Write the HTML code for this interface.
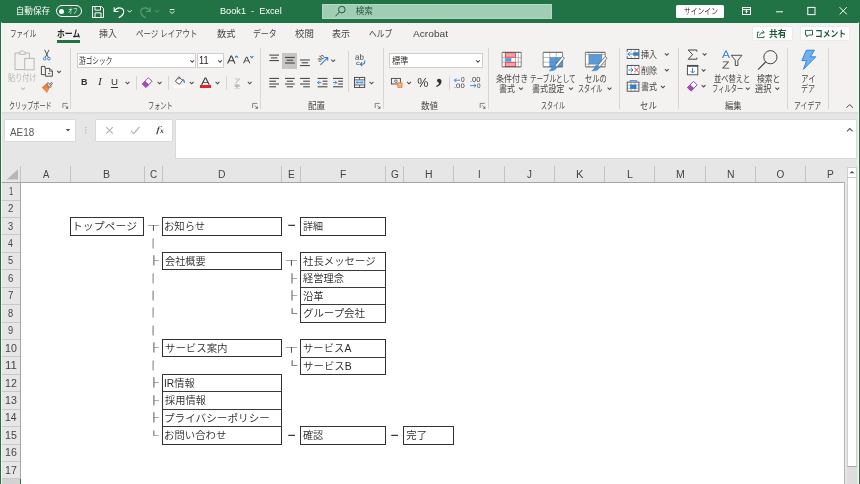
<!DOCTYPE html>
<html lang="ja">
<head>
<meta charset="utf-8">
<title>Book1 - Excel</title>
<style>
html,body{margin:0;padding:0}
body{width:860px;height:484px;overflow:hidden;position:relative;background:#e6e6e6;font-family:"Liberation Sans","Noto Sans CJK JP",sans-serif}
.a{position:absolute}
.t{position:absolute;white-space:pre;transform-origin:0 50%}
svg{position:absolute;overflow:visible}
.vs{position:absolute;width:1px;background:#d2d0ce}
.chev{position:absolute}
</style>
</head>
<body>
<!-- ===== title bar ===== -->
<div class="a" style="left:0;top:0;width:860px;height:22.5px;background:#217346"></div>
<!-- ribbon background -->
<div class="a" style="left:0;top:22.5px;width:860px;height:89.3px;background:#f3f2f1"></div>
<div class="a" style="left:0;top:111.8px;width:860px;height:3.6px;background:linear-gradient(#d9d9d9,#e6e6e6)"></div>
<!-- autosave toggle -->
<div class="a" style="left:55.5px;top:5px;width:26.5px;height:12.2px;border:1px solid #fff;border-radius:7px;box-sizing:border-box"></div>
<div class="a" style="left:58.6px;top:8.6px;width:5px;height:5px;border-radius:50%;background:#fff"></div>
<svg style="left:0;top:0" width="860" height="23" viewBox="0 0 860 23" fill="none" stroke="#fff" stroke-width="1">
<!-- save icon -->
<path d="M92.5 6.5h9l2 2v9h-11z"/>
<path d="M95 6.5v3.6h5.5V6.5"/>
<path d="M95 17.5v-4.6h6v4.6"/>
<!-- undo -->
<path d="M114.2 7.2v4.3h4.3" stroke-width="1.1"/>
<path d="M114.4 11.3c1.4-2.6 4-3.8 6.3-3.2c2.2 0.6 3.4 2.7 2.8 4.9c-0.5 1.9-2.3 3.6-4.8 4.7" stroke-width="1.1"/>
<path d="M127.6 10.2l2 2l2-2" stroke-width="1"/>
<!-- redo (disabled) -->
<g stroke="#5f9c7c">
<path d="M150.2 7.2v4.3h-4.3" stroke-width="1.1"/>
<path d="M150 11.3c-1.4-2.6-4-3.8-6.3-3.2c-2.2 0.6-3.4 2.7-2.8 4.9c0.5 1.9 2.3 3.6 4.8 4.7" stroke-width="1.1"/>
<path d="M155 10.2l2 2l2-2" stroke-width="1"/>
</g>
<!-- customize QAT -->
<path d="M169.8 9.6h4.6" stroke-width="1"/>
<path d="M169.8 11.3l2.3 2.3l2.3-2.3" stroke-width="1"/>
</svg>
<!-- search box -->
<div class="a" style="left:322px;top:3.8px;width:230px;height:15px;background:#a0ceb4;border:1px solid #b4d8c4;box-sizing:border-box"></div>
<svg style="left:0;top:0" width="860" height="23" viewBox="0 0 860 23" fill="none" stroke="#1d5a3a" stroke-width="1">
<circle cx="341.8" cy="9.6" r="3.3"/>
<path d="M339.4 12.1l-4 4.2"/>
</svg>
<!-- sign in -->
<div class="a" style="left:676.3px;top:4.5px;width:47.5px;height:13px;background:#fff;border-radius:1.5px"></div>
<svg style="left:0;top:0" width="860" height="23" viewBox="0 0 860 23" fill="none" stroke="#fff" stroke-width="1">
<!-- ribbon display options -->
<rect x="742.5" y="7.5" width="8" height="7"/>
<path d="M742.5 9.5h8"/>
<path d="M746.5 13.3v-2.8M745 11.8l1.5-1.5l1.5 1.5" stroke-width="0.9"/>
<!-- minimize -->
<path d="M776 11.8h7"/>
<!-- maximize -->
<rect x="807.8" y="7.4" width="7.2" height="7.2"/>
<!-- close -->
<path d="M839.6 7.2l7.2 7.2M846.8 7.2l-7.2 7.2"/>
</svg>

<!-- home underline -->
<div class="a" style="left:56.6px;top:40.4px;width:23.4px;height:2.2px;background:#217346"></div>
<!-- share / comment buttons -->
<div class="a" style="left:752.4px;top:26.1px;width:40.8px;height:15.4px;background:#fff;border:1px solid #edebe9;box-sizing:border-box;border-radius:2px"></div>
<div class="a" style="left:799.6px;top:26.1px;width:50.8px;height:15.4px;background:#fff;border:1px solid #edebe9;box-sizing:border-box;border-radius:2px"></div>
<svg style="left:0;top:0" width="860" height="46" viewBox="0 0 860 46" fill="none" stroke="#1e5a3a" stroke-width="0.9">
<!-- share icon -->
<path d="M759.2 32.2h-1.8v5.4h6.6v-1.6"/>
<path d="M759.6 35.6c0.4-2 1.8-3.3 4.2-3.4"/>
<path d="M762.4 30.4l1.8 1.8l-1.8 1.8"/>
<!-- comment icon -->
<path d="M805.5 30.4h7v4.6h-4l-1.7 1.8v-1.8h-1.3z"/>
</svg>

<div class="vs" style="left:70.3px;top:47.5px;height:61.5px;background:#d8d6d4"></div>
<div class="vs" style="left:260.1px;top:47.5px;height:61.5px;background:#d8d6d4"></div>
<div class="vs" style="left:382.5px;top:47.5px;height:61.5px;background:#d8d6d4"></div>
<div class="vs" style="left:488.3px;top:47.5px;height:61.5px;background:#d8d6d4"></div>
<div class="vs" style="left:618.7px;top:47.5px;height:61.5px;background:#d8d6d4"></div>
<div class="vs" style="left:678.0px;top:47.5px;height:61.5px;background:#d8d6d4"></div>
<div class="vs" style="left:787.1px;top:47.5px;height:61.5px;background:#d8d6d4"></div>
<div class="vs" style="left:828.1px;top:47.5px;height:61.5px;background:#d8d6d4"></div>
<div class="vs" style="left:135.9px;top:76px;height:13.6px;background:#d8d6d4"></div>
<div class="vs" style="left:167.9px;top:76px;height:13.6px;background:#d8d6d4"></div>
<div class="vs" style="left:226.2px;top:76px;height:13.6px;background:#d8d6d4"></div>
<div class="vs" style="left:449.0px;top:76px;height:13.6px;background:#d8d6d4"></div>
<div class="vs" style="left:348px;top:51.3px;height:40.5px;background:#d8d6d4"></div>
<div class="a" style="left:77px;top:53px;width:119.4px;height:15.4px;background:#fff;border:1px solid #d0cecc;box-sizing:border-box"></div>
<div class="a" style="left:197.1px;top:53px;width:27.2px;height:15.4px;background:#fff;border:1px solid #d0cecc;box-sizing:border-box"></div>
<div class="a" style="left:389px;top:53px;width:93.6px;height:15.4px;background:#fff;border:1px solid #d0cecc;box-sizing:border-box"></div>
<div class="a" style="left:282.2px;top:52.6px;width:14.8px;height:16px;background:#c8c6c4"></div>
<div class="a" style="left:174.2px;top:85.2px;width:10.6px;height:2.6px;background:#fff"></div>
<div class="a" style="left:199.8px;top:85.4px;width:11.1px;height:2.4px;background:#e8202a"></div>
<div class="a" style="left:111.4px;top:86.8px;width:6.8px;height:0.9px;background:#333"></div>
<svg style="left:0;top:0" width="860" height="112" viewBox="0 0 860 112" fill="none" stroke-linecap="butt">
<path d="M57.10 70.75l1.90 1.90l1.90 -1.90" stroke="#4a4948" stroke-width="1.05" fill="none"/>
<path d="M190.30 60.25l1.90 1.90l1.90 -1.90" stroke="#4a4948" stroke-width="1.05" fill="none"/>
<path d="M218.20 60.25l1.90 1.90l1.90 -1.90" stroke="#4a4948" stroke-width="1.05" fill="none"/>
<path d="M125.60 81.85l1.90 1.90l1.90 -1.90" stroke="#4a4948" stroke-width="1.05" fill="none"/>
<path d="M157.70 81.85l1.90 1.90l1.90 -1.90" stroke="#4a4948" stroke-width="1.05" fill="none"/>
<path d="M189.80 81.85l1.90 1.90l1.90 -1.90" stroke="#4a4948" stroke-width="1.05" fill="none"/>
<path d="M215.60 81.85l1.90 1.90l1.90 -1.90" stroke="#4a4948" stroke-width="1.05" fill="none"/>
<path d="M247.80 81.85l1.90 1.90l1.90 -1.90" stroke="#4a4948" stroke-width="1.05" fill="none"/>
<path d="M331.30 59.65l1.90 1.90l1.90 -1.90" stroke="#4a4948" stroke-width="1.05" fill="none"/>
<path d="M369.60 81.85l1.90 1.90l1.90 -1.90" stroke="#4a4948" stroke-width="1.05" fill="none"/>
<path d="M476.10 60.25l1.90 1.90l1.90 -1.90" stroke="#4a4948" stroke-width="1.05" fill="none"/>
<path d="M407.10 81.85l1.90 1.90l1.90 -1.90" stroke="#4a4948" stroke-width="1.05" fill="none"/>
<path d="M519.10 87.65l1.90 1.90l1.90 -1.90" stroke="#4a4948" stroke-width="1.05" fill="none"/>
<path d="M569.10 87.65l1.90 1.90l1.90 -1.90" stroke="#4a4948" stroke-width="1.05" fill="none"/>
<path d="M607.60 87.65l1.90 1.90l1.90 -1.90" stroke="#4a4948" stroke-width="1.05" fill="none"/>
<path d="M664.90 53.45l1.90 1.90l1.90 -1.90" stroke="#4a4948" stroke-width="1.05" fill="none"/>
<path d="M664.90 69.05l1.90 1.90l1.90 -1.90" stroke="#4a4948" stroke-width="1.05" fill="none"/>
<path d="M661.00 85.95l1.90 1.90l1.90 -1.90" stroke="#4a4948" stroke-width="1.05" fill="none"/>
<path d="M702.70 53.25l1.90 1.90l1.90 -1.90" stroke="#4a4948" stroke-width="1.05" fill="none"/>
<path d="M701.70 69.25l1.90 1.90l1.90 -1.90" stroke="#4a4948" stroke-width="1.05" fill="none"/>
<path d="M701.70 85.05l1.90 1.90l1.90 -1.90" stroke="#4a4948" stroke-width="1.05" fill="none"/>
<path d="M745.90 87.65l1.90 1.90l1.90 -1.90" stroke="#4a4948" stroke-width="1.05" fill="none"/>
<path d="M775.40 87.65l1.90 1.90l1.90 -1.90" stroke="#4a4948" stroke-width="1.05" fill="none"/>
<path d="M21.10 87.65l1.90 1.90l1.90 -1.90" stroke="#bdbbb9" stroke-width="1.05" fill="none"/>
<path d="M846.4 107.8l3.3-3.3l3.3 3.3" stroke="#444" stroke-width="1"/>
<path d="M67.5 103.4h-4.6v4.6" stroke="#6a6866" stroke-width="0.8"/>
<path d="M64.9 105.4l2.8 2.8" stroke="#6a6866" stroke-width="0.8"/>
<path d="M68.1 106.0v2.8h-2.8z" fill="#6a6866" stroke="none"/>
<path d="M257.2 103.4h-4.6v4.6" stroke="#6a6866" stroke-width="0.8"/>
<path d="M254.6 105.4l2.8 2.8" stroke="#6a6866" stroke-width="0.8"/>
<path d="M257.8 106.0v2.8h-2.8z" fill="#6a6866" stroke="none"/>
<path d="M379.8 103.4h-4.6v4.6" stroke="#6a6866" stroke-width="0.8"/>
<path d="M377.2 105.4l2.8 2.8" stroke="#6a6866" stroke-width="0.8"/>
<path d="M380.4 106.0v2.8h-2.8z" fill="#6a6866" stroke="none"/>
<path d="M484.8 103.4h-4.6v4.6" stroke="#6a6866" stroke-width="0.8"/>
<path d="M482.2 105.4l2.8 2.8" stroke="#6a6866" stroke-width="0.8"/>
<path d="M485.4 106.0v2.8h-2.8z" fill="#6a6866" stroke="none"/>
<path d="M19.6 53h-4.6v16.6h9.4" stroke="#b9b7b5" stroke-width="1"/>
<path d="M25 53h4.4v5" stroke="#b9b7b5" stroke-width="1"/>
<path d="M19.4 54.4v-2.4h1.6c0-2 2.8-2 2.8 0h1.6v2.4z" stroke="#b9b7b5" stroke-width="0.9"/>
<rect x="24.7" y="58.4" width="9.4" height="11.4" stroke="#b9b7b5" stroke-width="1" fill="#f3f2f1"/>
<path d="M44.6 49.8l3.6 7.4M49 49.8l-3.6 7.4" stroke="#444" stroke-width="0.9"/>
<circle cx="44.7" cy="58.7" r="1.35" stroke="#2b7cd3" stroke-width="0.9"/>
<circle cx="48.9" cy="58.7" r="1.35" stroke="#2b7cd3" stroke-width="0.9"/>
<path d="M45 68.4v-2h-3.6v8.2h3.4" stroke="#444" stroke-width="0.95"/>
<path d="M45.4 68.4h4.4l2.6 2.6v5.2h-7z" stroke="#444" stroke-width="0.95"/>
<path d="M49.6 68.6v2.6h2.6" stroke="#444" stroke-width="0.8"/>
<path d="M48 73.6h2.4" stroke="#444" stroke-width="0.8"/>
<path d="M42.2 87.4l4.2-3.4l3 3.6l-2.6 5z" fill="#ed7d31" stroke="#e0701f" stroke-width="0.6"/>
<path d="M43.8 89.2l2.8 2.6M45.4 87.6l2.8 2.8" stroke="#fbd3b3" stroke-width="0.6"/>
<path d="M46.6 83.8l1.6-1.2l3.2 3.8l-1.6 1.2z" stroke="#444" stroke-width="0.8" fill="#f3f2f1"/>
<path d="M49.6 84.2l1.4-1.4c0.8-0.7 1.8 0.4 1.1 1.2l-1.3 1.4" stroke="#444" stroke-width="0.8"/>
<path d="M142.3 84l6-6.2l3.8 3.4l-6 6.2z" stroke="#a349b5" stroke-width="1" fill="#fff"/>
<path d="M142.3 84l2.7-2.8l3.8 3.4l-2.7 2.8z" fill="#a349b5" stroke="#a349b5" stroke-width="0.6"/>
<path d="M177.6 78.2l-2.2 3.2l4 3l3.2-4.2l-3.6-2.8" stroke="#444" stroke-width="0.9" fill="#fff"/>
<path d="M178.2 79.6v-2.2c0-0.9 1.5-0.9 1.5 0v1.2" stroke="#444" stroke-width="0.7"/>
<path d="M182.6 79.2c1.3 0.7 1.9 2 1.6 3.6" stroke="#2b7cd3" stroke-width="1.1"/>
<path d="M235 57.7l1.5-1.6l1.5 1.6" stroke="#2b7cd3" stroke-width="1.05"/>
<path d="M250.3 56.1l1.5 1.6l1.5-1.6" stroke="#2b7cd3" stroke-width="1.05"/>
<path d="M269.3 55.1H279" stroke="#3a3a3a" stroke-width="1.0"/>
<path d="M271 57.9H277.4" stroke="#3a3a3a" stroke-width="1.0"/>
<path d="M269.3 60.6H279" stroke="#3a3a3a" stroke-width="1.0"/>
<path d="M285 57.4H294.8" stroke="#3a3a3a" stroke-width="1.0"/>
<path d="M286.6 60.2H293.2" stroke="#3a3a3a" stroke-width="1.0"/>
<path d="M285 63H294.8" stroke="#3a3a3a" stroke-width="1.0"/>
<path d="M300 60H309.9" stroke="#3a3a3a" stroke-width="1.0"/>
<path d="M301.6 62.8H308.2" stroke="#3a3a3a" stroke-width="1.0"/>
<path d="M300 65.6H309.9" stroke="#3a3a3a" stroke-width="1.0"/>
<path d="M269.3 78.4H279" stroke="#3a3a3a" stroke-width="1.0"/>
<path d="M269.3 81.2H276" stroke="#3a3a3a" stroke-width="1.0"/>
<path d="M269.3 84H279" stroke="#3a3a3a" stroke-width="1.0"/>
<path d="M269.3 86.8H276" stroke="#3a3a3a" stroke-width="1.0"/>
<path d="M285 78.4H294.8" stroke="#3a3a3a" stroke-width="1.0"/>
<path d="M286.8 81.2H293" stroke="#3a3a3a" stroke-width="1.0"/>
<path d="M285 84H294.8" stroke="#3a3a3a" stroke-width="1.0"/>
<path d="M286.8 86.8H293" stroke="#3a3a3a" stroke-width="1.0"/>
<path d="M300 78.4H309.9" stroke="#3a3a3a" stroke-width="1.0"/>
<path d="M303.2 81.2H309.9" stroke="#3a3a3a" stroke-width="1.0"/>
<path d="M300 84H309.9" stroke="#3a3a3a" stroke-width="1.0"/>
<path d="M303.2 86.8H309.9" stroke="#3a3a3a" stroke-width="1.0"/>
<path d="M317.6 78.4H327.5" stroke="#3a3a3a" stroke-width="1.0"/>
<path d="M317.6 86.8H327.5" stroke="#3a3a3a" stroke-width="1.0"/>
<path d="M322.6 81.2H327.5" stroke="#3a3a3a" stroke-width="1.0"/>
<path d="M322.6 84H327.5" stroke="#3a3a3a" stroke-width="1.0"/>
<path d="M321.4 82.6h-3.8M319.4 80.8l-1.8 1.8l1.8 1.8" stroke="#2b7cd3" stroke-width="0.9"/>
<path d="M333 78.4H343" stroke="#3a3a3a" stroke-width="1.0"/>
<path d="M333 86.8H343" stroke="#3a3a3a" stroke-width="1.0"/>
<path d="M338.2 81.2H343" stroke="#3a3a3a" stroke-width="1.0"/>
<path d="M338.2 84H343" stroke="#3a3a3a" stroke-width="1.0"/>
<path d="M333 82.6h3.8M335 80.8l1.8 1.8l-1.8 1.8" stroke="#2b7cd3" stroke-width="0.9"/>
<path d="M320.4 64.9l7.2-7.3M324.4 57.4h3.3v3.3" stroke="#2b7cd3" stroke-width="1.05"/>
<path d="M364.6 60.4c0.6 2.2-0.4 3.8-2.4 3.9h-1.8M362.2 62.4l-1.9 1.9l1.9 1.9" stroke="#2b7cd3" stroke-width="1.05"/>
<rect x="354.5" y="77.4" width="10.2" height="10" stroke="#444" stroke-width="0.95" fill="#fff"/>
<rect x="355" y="80" width="9.2" height="4.8" fill="#cfe3f7" stroke="none"/>
<path d="M354.5 79.8h10.2M354.5 85h10.2M359.6 77.4v2.4M359.6 85v2.4" stroke="#444" stroke-width="0.8"/>
<path d="M356.4 82.4h6.4M357.6 81.2l-1.3 1.2l1.3 1.2M361.6 81.2l1.3 1.2l-1.3 1.2" stroke="#2b7cd3" stroke-width="0.8"/>
<rect x="391.4" y="78.4" width="9" height="5.6" stroke="#444" stroke-width="0.9"/>
<circle cx="395.9" cy="81.2" r="1.3" stroke="#444" stroke-width="0.7"/>
<rect x="397.4" y="82.4" width="5" height="5.4" fill="#ed7d31" stroke="none"/>
<path d="M398.2 84.2h3.4M398.2 86h3.4" stroke="#fff" stroke-width="0.7"/>
<path d="M454.4 80.2h5.6M456.2 78.4l-1.8 1.8l1.8 1.8" stroke="#2b7cd3" stroke-width="0.9"/>
<path d="M470.2 85.6h5.8M474.2 83.8l1.8 1.8l-1.8 1.8" stroke="#2b7cd3" stroke-width="0.9"/>
<rect x="502.1" y="52.3" width="19.100000000000023" height="14.600000000000009" fill="#fff" stroke="none"/>
<path d="M505.2 52.3V66.9M515.5 52.3V66.9M518.3 52.3V66.9M502.1 57.6H521.2M502.1 62.1H521.2" stroke="#8f8f8f" stroke-width="0.6"/>
<rect x="505.4" y="52.8" width="10" height="4.4" fill="#f8a0a8" stroke="#f03a45" stroke-width="0.8"/>
<rect x="505.2" y="58.1" width="6.2" height="3.6" fill="#5b9bd5" stroke="none"/>
<rect x="505.4" y="62.6" width="10.3" height="4" fill="#f8a0a8" stroke="#f03a45" stroke-width="0.8"/>
<path d="M502.1 52.3H521.2M502.1 66.9H521.2" stroke="#444" stroke-width="0.9"/>
<path d="M502.1 52.3V66.9M521.2 52.3V66.9" stroke="#6a6a6a" stroke-width="0.8"/>
<rect x="543.1" y="52.3" width="19.5" height="14.600000000000009" fill="#fff" stroke="none"/>
<rect x="549.8" y="57.5" width="12.8" height="9.4" fill="#5b9bd5"/>
<path d="M549.8 52.3V57.5M556.2 52.3V57.5M543.1 57.5H549.8M543.1 62.2H549.8" stroke="#8f8f8f" stroke-width="0.6"/>
<path d="M549.8 57.5V66.9M556.2 57.5V66.9M549.8 57.5H562.6M549.8 62.2H562.6" stroke="#3f7fc0" stroke-width="0.6"/>
<path d="M543.1 52.3H562.6M543.1 66.9H562.6" stroke="#444" stroke-width="0.9"/>
<path d="M543.1 52.3V66.9M562.6 52.3V66.9" stroke="#6a6a6a" stroke-width="0.8"/>
<path d="M562.3 56.5l2 1.6l-7.5 9.2l-2-1.6z" fill="#fafafa" stroke="#555" stroke-width="0.7"/>
<path d="M557 67.2c-0.9 2.4-3.9 4-8 3.6c2-1 2.4-2.4 3-4c0.8-1.8 2.6-2.2 3.4-1.4z" fill="#4a90d9" stroke="#3f86d0" stroke-width="0.5"/>
<rect x="585.4" y="52.3" width="19.800000000000068" height="14.600000000000009" fill="#fff" stroke="none"/>
<path d="M588.8 52.3V66.9M601.8 52.3V66.9M585.4 54.4H605.2M585.4 64.2H605.2" stroke="#8f8f8f" stroke-width="0.6"/>
<rect x="589.2" y="54.7" width="12.2" height="9.2" fill="#5b9bd5" stroke="#3f7fc0" stroke-width="0.6"/>
<path d="M585.4 52.3H605.2M585.4 66.9H605.2" stroke="#444" stroke-width="0.9"/>
<path d="M585.4 52.3V66.9M605.2 52.3V66.9" stroke="#6a6a6a" stroke-width="0.8"/>
<path d="M605.0999999999999 56.5l2 1.6l-7.5 9.2l-2-1.6z" fill="#fafafa" stroke="#555" stroke-width="0.7"/>
<path d="M599.8 67.2c-0.9 2.4-3.9 4-8 3.6c2-1 2.4-2.4 3-4c0.8-1.8 2.6-2.2 3.4-1.4z" fill="#4a90d9" stroke="#3f86d0" stroke-width="0.5"/>
<rect x="627.2" y="49.4" width="11.7" height="9.1" fill="#fff" stroke="none"/>
<path d="M627.2 52.4h11.7M627.2 55.5h11.7M631.1 49.4v9.1M635.0 49.4v9.1" stroke="#777" stroke-width="0.6"/>
<rect x="627.2" y="49.4" width="11.7" height="9.1" fill="none" stroke="#444" stroke-width="0.9"/>
<rect x="626.6" y="51.8" width="6.6" height="4.4" fill="#fff" stroke="none"/>
<rect x="633.2" y="52.6" width="5.699999999999999" height="2.8" fill="#2b7cd3"/>
<path d="M633.4000000000001 54.0h-5.6M629.8000000000001 52.0l-2 2l2 2" stroke="#2b7cd3" stroke-width="1"/>
<rect x="627.2" y="65.4" width="11.7" height="9.1" fill="#fff" stroke="none"/>
<path d="M627.2 68.4h11.7M627.2 71.5h11.7M631.1 65.4v9.1M635.0 65.4v9.1" stroke="#777" stroke-width="0.6"/>
<rect x="627.2" y="65.4" width="11.7" height="9.1" fill="none" stroke="#444" stroke-width="0.9"/>
<rect x="627.7" y="67.60000000000001" width="11.299999999999999" height="4.8" fill="#fff" stroke="none"/>
<path d="M628.4000000000001 70.0h4.6M631.2 68.2l1.8 1.8l-1.8 1.8" stroke="#2b7cd3" stroke-width="1"/>
<path d="M634.6 68.0l3.8 3.9M638.4000000000001 68.0l-3.8 3.9" stroke="#e8303a" stroke-width="1"/>
<rect x="627.2" y="82.1" width="11.7" height="9.1" fill="#fff" stroke="none"/>
<path d="M627.2 85.1h11.7M627.2 88.19999999999999h11.7M631.1 82.1v9.1M635.0 82.1v9.1" stroke="#777" stroke-width="0.6"/>
<rect x="627.2" y="82.1" width="11.7" height="9.1" fill="none" stroke="#444" stroke-width="0.9"/>
<rect x="630.2" y="84.69999999999999" width="6.2" height="4.2" fill="#2b7cd3"/>
<path d="M630.0 81.69999999999999v-1h6.8v1" stroke="#2b7cd3" stroke-width="0.9"/>
<path d="M696.8 51.6v-1.6h-8.6l4.4 4.6l-4.4 4.6h8.6v-1.6" stroke="#444" stroke-width="1"/>
<rect x="687.4" y="65.4" width="10.4" height="9.4" stroke="#444" stroke-width="0.9" fill="#fff"/>
<path d="M687 66h11.2" stroke="#444" stroke-width="1.5"/>
<path d="M692.6 68v5M690.6 71l2 2l2-2" stroke="#2b7cd3" stroke-width="1"/>
<path d="M687.4 87.6l6-6.2l3.8 3.4l-6 6.2z" stroke="#a349b5" stroke-width="1" fill="#fff"/>
<path d="M687.4 87.6l2.7-2.8l3.8 3.4l-2.7 2.8z" fill="#a349b5" stroke="#a349b5" stroke-width="0.6"/>
<path d="M731.2 55.3h10.8l-4.1 4.9v5.3h-2.6v-5.3z" stroke="#444" stroke-width="0.95"/>
<circle cx="770.4" cy="57.2" r="6.6" stroke="#444" stroke-width="1"/>
<path d="M765.6 62l-7.6 7.6" stroke="#444" stroke-width="1.1"/>
<path d="M806.4 50.2h8l-4 6.6h5.4l-12.4 12.6l3.2-8.8h-4.8z" fill="#6fb1ee" stroke="#2b7cd3" stroke-width="0.9" stroke-linejoin="round"/>
<text x="0" y="0" transform="translate(319.6,62.6) rotate(-45)" font-family="Liberation Sans, sans-serif" font-size="7" fill="#444" stroke="none">ab</text>
</svg>
<!-- name box -->
<div class="a" style="left:4.5px;top:119.6px;width:70.6px;height:21.4px;background:#fff;box-shadow:0 0 0 0.6px #d2d2d2"></div>
<!-- fx box -->
<div class="a" style="left:96.4px;top:119.6px;width:75.8px;height:21.4px;background:#fff;box-shadow:0 0 0 0.6px #d2d2d2"></div>
<!-- formula input -->
<div class="a" style="left:175.5px;top:119.6px;width:680px;height:38.5px;background:#fff;box-shadow:0 0 0 0.6px #d2d2d2"></div>
<svg style="left:0;top:0" width="860" height="166" viewBox="0 0 860 166" fill="none">
<!-- name box dropdown -->
<path d="M65.7 129h4.7l-2.35 2.5z" fill="#555"/>
<!-- dots -->
<circle cx="85.8" cy="127.6" r="0.6" fill="#a0a0a0"/><circle cx="85.8" cy="130.2" r="0.6" fill="#a0a0a0"/><circle cx="85.8" cy="132.8" r="0.6" fill="#a0a0a0"/>
<!-- x and check -->
<path d="M106.2 127.2l6.6 6.4M112.8 127.2l-6.6 6.4" stroke="#b0b0b0" stroke-width="1.1"/>
<path d="M130.8 130.6l3 3l5.6-6.8" stroke="#b0b0b0" stroke-width="1.1"/>
<!-- expand formula bar -->
<path d="M847 131.4l2.8-2.8l2.8 2.8" stroke="#555" stroke-width="1.1"/>
</svg>

<div class="a" style="left:21px;top:182.5px;width:823.7px;height:302px;background:#fff"></div>
<div class="a" style="left:1.3px;top:181.7px;width:844px;height:1px;background:#a6a6a6"></div>
<div class="a" style="left:844.2px;top:182px;width:1.1px;height:302px;background:#b4b4b4"></div>
<div class="a" style="left:20.1px;top:182px;width:1px;height:302px;background:#a6a6a6"></div>
<div class="a" style="left:20.0px;top:166px;width:1px;height:16px;background:#c3c3c3"></div>
<div class="a" style="left:69.9px;top:166px;width:1px;height:16px;background:#c3c3c3"></div>
<div class="a" style="left:143.5px;top:166px;width:1px;height:16px;background:#c3c3c3"></div>
<div class="a" style="left:161.9px;top:166px;width:1px;height:16px;background:#c3c3c3"></div>
<div class="a" style="left:281.3px;top:166px;width:1px;height:16px;background:#c3c3c3"></div>
<div class="a" style="left:299.9px;top:166px;width:1px;height:16px;background:#c3c3c3"></div>
<div class="a" style="left:384.8px;top:166px;width:1px;height:16px;background:#c3c3c3"></div>
<div class="a" style="left:403.0px;top:166px;width:1px;height:16px;background:#c3c3c3"></div>
<div class="a" style="left:453.2px;top:166px;width:1px;height:16px;background:#c3c3c3"></div>
<div class="a" style="left:503.7px;top:166px;width:1px;height:16px;background:#c3c3c3"></div>
<div class="a" style="left:553.9px;top:166px;width:1px;height:16px;background:#c3c3c3"></div>
<div class="a" style="left:604.1px;top:166px;width:1px;height:16px;background:#c3c3c3"></div>
<div class="a" style="left:654.4px;top:166px;width:1px;height:16px;background:#c3c3c3"></div>
<div class="a" style="left:704.6px;top:166px;width:1px;height:16px;background:#c3c3c3"></div>
<div class="a" style="left:754.8px;top:166px;width:1px;height:16px;background:#c3c3c3"></div>
<div class="a" style="left:805.1px;top:166px;width:1px;height:16px;background:#c3c3c3"></div>
<div class="a" style="left:1.3px;top:199.62px;width:19px;height:1px;background:#c9c9c9"></div>
<div class="a" style="left:1.3px;top:217.04px;width:19px;height:1px;background:#c9c9c9"></div>
<div class="a" style="left:1.3px;top:234.46px;width:19px;height:1px;background:#c9c9c9"></div>
<div class="a" style="left:1.3px;top:251.88px;width:19px;height:1px;background:#c9c9c9"></div>
<div class="a" style="left:1.3px;top:269.30px;width:19px;height:1px;background:#c9c9c9"></div>
<div class="a" style="left:1.3px;top:286.72px;width:19px;height:1px;background:#c9c9c9"></div>
<div class="a" style="left:1.3px;top:304.14px;width:19px;height:1px;background:#c9c9c9"></div>
<div class="a" style="left:1.3px;top:321.56px;width:19px;height:1px;background:#c9c9c9"></div>
<div class="a" style="left:1.3px;top:338.98px;width:19px;height:1px;background:#c9c9c9"></div>
<div class="a" style="left:1.3px;top:356.40px;width:19px;height:1px;background:#c9c9c9"></div>
<div class="a" style="left:1.3px;top:373.82px;width:19px;height:1px;background:#c9c9c9"></div>
<div class="a" style="left:1.3px;top:391.24px;width:19px;height:1px;background:#c9c9c9"></div>
<div class="a" style="left:1.3px;top:408.66px;width:19px;height:1px;background:#c9c9c9"></div>
<div class="a" style="left:1.3px;top:426.08px;width:19px;height:1px;background:#c9c9c9"></div>
<div class="a" style="left:1.3px;top:443.50px;width:19px;height:1px;background:#c9c9c9"></div>
<div class="a" style="left:1.3px;top:460.92px;width:19px;height:1px;background:#c9c9c9"></div>
<div class="a" style="left:1.3px;top:478.34px;width:19px;height:1px;background:#c9c9c9"></div>
<div class="a" style="left:1.3px;top:479.14px;width:19px;height:6px;background:#d2d2d2"></div>
<div class="a" style="left:19.6px;top:478.84px;width:1.5px;height:6px;background:#217346"></div>
<svg style="left:0;top:0" width="30" height="190"><polygon points="6.8,179.4 18,179.4 18,169.3" fill="#b7b7b7"/></svg>
<div class="a" style="left:70.10px;top:217.24px;width:74.40px;height:18.32px;border:1px solid #333;box-sizing:border-box"></div>
<div class="a" style="left:162.10px;top:217.24px;width:120.30px;height:18.32px;border:1px solid #333;box-sizing:border-box"></div>
<div class="a" style="left:300.10px;top:217.24px;width:85.80px;height:18.32px;border:1px solid #333;box-sizing:border-box"></div>
<div class="a" style="left:162.10px;top:252.08px;width:120.30px;height:18.32px;border:1px solid #333;box-sizing:border-box"></div>
<div class="a" style="left:300.10px;top:252.08px;width:85.80px;height:70.58px;border:1px solid #333;box-sizing:border-box"></div>
<div class="a" style="left:300.20px;top:269.50px;width:85.70px;height:1px;background:#3a3a3a"></div>
<div class="a" style="left:300.20px;top:286.92px;width:85.70px;height:1px;background:#3a3a3a"></div>
<div class="a" style="left:300.20px;top:304.34px;width:85.70px;height:1px;background:#3a3a3a"></div>
<div class="a" style="left:162.10px;top:339.18px;width:120.30px;height:18.32px;border:1px solid #333;box-sizing:border-box"></div>
<div class="a" style="left:300.10px;top:339.18px;width:85.80px;height:35.74px;border:1px solid #333;box-sizing:border-box"></div>
<div class="a" style="left:300.20px;top:356.60px;width:85.70px;height:1px;background:#3a3a3a"></div>
<div class="a" style="left:162.10px;top:374.02px;width:120.30px;height:70.58px;border:1px solid #333;box-sizing:border-box"></div>
<div class="a" style="left:162.20px;top:391.44px;width:120.20px;height:1px;background:#3a3a3a"></div>
<div class="a" style="left:162.20px;top:408.86px;width:120.20px;height:1px;background:#3a3a3a"></div>
<div class="a" style="left:162.20px;top:426.28px;width:120.20px;height:1px;background:#3a3a3a"></div>
<div class="a" style="left:300.10px;top:426.28px;width:85.80px;height:18.32px;border:1px solid #333;box-sizing:border-box"></div>
<div class="a" style="left:403.30px;top:426.28px;width:51.10px;height:18.32px;border:1px solid #333;box-sizing:border-box"></div>
<div class="a" style="left:845.3px;top:166px;width:13px;height:318px;background:#e6e6e6"></div>
<div class="a" style="left:846.6px;top:166.8px;width:10.2px;height:299.8px;background:#fff;border:1px solid #cfcfcf;border-bottom-color:#ababab;box-sizing:border-box"></div>
<div class="a" style="left:846.6px;top:176.8px;width:10.2px;height:1px;background:#c8c8c8"></div>
<div class="a" style="left:846.6px;top:466.6px;width:10.6px;height:18px;background:#dddddd"></div>
<svg style="left:0;top:0" width="860" height="200"><polygon points="849.4,173.3 854.6,173.3 852,170.9" fill="#555"/></svg>
<div id="txt" style="position:absolute;left:0;top:0;width:860px;height:484px;will-change:transform">
<span class="t" style="left:15.75px;top:1.00px;font-size:8.6px;line-height:20px;color:#ffffff;font-family:'Liberation Sans','Noto Sans CJK JP',sans-serif;font-weight:400;transform:scaleX(1.0000);">自動保存</span>
<span class="t" style="left:68.44px;top:1.20px;font-size:6.8px;line-height:20px;color:#ffffff;font-family:'Liberation Sans','Noto Sans CJK JP',sans-serif;font-weight:400;transform:scaleX(0.7102);">オフ</span>
<span class="t" style="left:219.78px;top:1.00px;font-size:9.6px;line-height:20px;color:#ffffff;font-family:'Liberation Sans','Noto Sans CJK JP',sans-serif;font-weight:400;transform:scaleX(0.9565);">Book1  -  Excel</span>
<span class="t" style="left:355.75px;top:1.20px;font-size:8.6px;line-height:20px;color:#1d4a33;font-family:'Liberation Sans','Noto Sans CJK JP',sans-serif;font-weight:350;transform:scaleX(1.0000);">検索</span>
<span class="t" style="left:683.60px;top:1.00px;font-size:8.4px;line-height:20px;color:#222;font-family:'Liberation Sans','Noto Sans CJK JP',sans-serif;font-weight:350;transform:scaleX(0.8098);">サインイン</span>
<span class="t" style="left:9.62px;top:24.20px;font-size:9.3px;line-height:20px;color:#444342;font-family:'Liberation Sans','Noto Sans CJK JP',sans-serif;font-weight:400;transform:scaleX(0.7042);">ファイル</span>
<span class="t" style="left:56.58px;top:24.00px;font-size:9.3px;line-height:20px;color:#252423;font-family:'Liberation Sans','Noto Sans CJK JP',sans-serif;font-weight:bold;transform:scaleX(0.8411);">ホーム</span>
<span class="t" style="left:98.56px;top:24.20px;font-size:9.3px;line-height:20px;color:#444342;font-family:'Liberation Sans','Noto Sans CJK JP',sans-serif;font-weight:400;transform:scaleX(0.9556);">挿入</span>
<span class="t" style="left:135.60px;top:24.20px;font-size:9.3px;line-height:20px;color:#444342;font-family:'Liberation Sans','Noto Sans CJK JP',sans-serif;font-weight:400;transform:scaleX(0.8000);">ページ レイアウト</span>
<span class="t" style="left:216.75px;top:24.20px;font-size:9.3px;line-height:20px;color:#444342;font-family:'Liberation Sans','Noto Sans CJK JP',sans-serif;font-weight:400;transform:scaleX(0.9863);">数式</span>
<span class="t" style="left:253.37px;top:24.20px;font-size:9.3px;line-height:20px;color:#444342;font-family:'Liberation Sans','Noto Sans CJK JP',sans-serif;font-weight:400;transform:scaleX(0.8462);">データ</span>
<span class="t" style="left:294.75px;top:24.20px;font-size:9.3px;line-height:20px;color:#444342;font-family:'Liberation Sans','Noto Sans CJK JP',sans-serif;font-weight:400;transform:scaleX(1.0141);">校閲</span>
<span class="t" style="left:332.26px;top:24.20px;font-size:9.3px;line-height:20px;color:#444342;font-family:'Liberation Sans','Noto Sans CJK JP',sans-serif;font-weight:400;transform:scaleX(0.9722);">表示</span>
<span class="t" style="left:368.58px;top:24.20px;font-size:9.3px;line-height:20px;color:#444342;font-family:'Liberation Sans','Noto Sans CJK JP',sans-serif;font-weight:400;transform:scaleX(0.8364);">ヘルプ</span>
<span class="t" style="left:412.50px;top:24.20px;font-size:9.6px;line-height:20px;color:#444342;font-family:'Liberation Sans','Noto Sans CJK JP',sans-serif;font-weight:400;transform:scaleX(1.0606);">Acrobat</span>
<span class="t" style="left:768.76px;top:23.60px;font-size:9px;line-height:20px;color:#1e5a3a;font-family:'Liberation Sans','Noto Sans CJK JP',sans-serif;font-weight:bold;transform:scaleX(0.9714);">共有</span>
<span class="t" style="left:814.93px;top:23.60px;font-size:9px;line-height:20px;color:#1e5a3a;font-family:'Liberation Sans','Noto Sans CJK JP',sans-serif;font-weight:bold;transform:scaleX(0.8593);">コメント</span>
<span class="t" style="left:7.81px;top:68.00px;font-size:9.3px;line-height:20px;color:#b1afad;font-family:'Liberation Sans','Noto Sans CJK JP',sans-serif;font-weight:350;transform:scaleX(0.7724);">貼り付け</span>
<span class="t" style="left:8.72px;top:96.20px;font-size:9px;line-height:20px;color:#484644;font-family:'Liberation Sans','Noto Sans CJK JP',sans-serif;font-weight:400;transform:scaleX(0.6754);">クリップボード</span>
<span class="t" style="left:78.61px;top:51.00px;font-size:8.8px;line-height:20px;color:#222;font-family:'Liberation Sans','Noto Sans CJK JP',sans-serif;font-weight:350;transform:scaleX(0.7602);">游ゴシック</span>
<span class="t" style="left:199.11px;top:51.00px;font-size:10px;line-height:20px;color:#222;font-family:'Liberation Sans','Noto Sans CJK JP',sans-serif;font-weight:350;transform:scaleX(0.9189);">11</span>
<span class="t" style="left:81.33px;top:72.20px;font-size:9.6px;line-height:20px;color:#333;font-family:'Liberation Sans','Noto Sans CJK JP',sans-serif;font-weight:bold;transform:scaleX(0.9333);">B</span>
<span class="t" style="left:98.20px;top:72.20px;font-size:9.8px;line-height:20px;color:#333;font-family:'Liberation Serif',serif;font-weight:350;font-style:italic;transform:scaleX(1.1733);">I</span>
<span class="t" style="left:111.47px;top:72.00px;font-size:9.2px;line-height:20px;color:#333;font-family:'Liberation Sans','Noto Sans CJK JP',sans-serif;font-weight:350;transform:scaleX(1.0545);">U</span>
<span class="t" style="left:226.78px;top:48.95px;font-size:11px;line-height:20px;color:#3a3a3a;font-family:'Liberation Sans','Noto Sans CJK JP',sans-serif;font-weight:350;transform-origin:0 0;transform:scale(1.1652,1.0444) rotate(0.03deg);">A</span>
<span class="t" style="left:243.22px;top:50.07px;font-size:9.5px;line-height:20px;color:#3a3a3a;font-family:'Liberation Sans','Noto Sans CJK JP',sans-serif;font-weight:350;transform-origin:0 0;transform:scale(1.1553,1.0141) rotate(0.03deg);">A</span>
<span class="t" style="left:200.51px;top:70.80px;font-size:10px;line-height:20px;color:#3a3a3a;font-family:'Liberation Sans','Noto Sans CJK JP',sans-serif;font-weight:350;transform-origin:0 0;transform:scale(1.3284,1.0484) rotate(0.03deg);">A</span>
<span class="t" style="left:147.95px;top:96.20px;font-size:9px;line-height:20px;color:#484644;font-family:'Liberation Sans','Noto Sans CJK JP',sans-serif;font-weight:400;transform:scaleX(0.6806);">フォント</span>
<span class="t" style="left:307.52px;top:96.20px;font-size:9px;line-height:20px;color:#484644;font-family:'Liberation Sans','Noto Sans CJK JP',sans-serif;font-weight:400;transform:scaleX(0.9565);">配置</span>
<span class="t" style="left:391.76px;top:51.00px;font-size:8.8px;line-height:20px;color:#222;font-family:'Liberation Sans','Noto Sans CJK JP',sans-serif;font-weight:350;transform:scaleX(0.9412);">標準</span>
<span class="t" style="left:417.25px;top:72.60px;font-size:12.5px;line-height:20px;color:#333;font-family:'Liberation Sans','Noto Sans CJK JP',sans-serif;font-weight:350;transform:scaleX(1.0000);">%</span>
<span class="t" style="left:435.55px;top:59.52px;font-size:20px;line-height:20px;color:#333;font-family:'Liberation Serif',serif;font-weight:bold;transform-origin:0 0;transform:scale(1.3067,1.3441) rotate(0.03deg);">,</span>
<span class="t" style="left:420.76px;top:96.20px;font-size:9px;line-height:20px;color:#484644;font-family:'Liberation Sans','Noto Sans CJK JP',sans-serif;font-weight:400;transform:scaleX(0.9429);">数値</span>
<span class="t" style="left:495.78px;top:68.90px;font-size:9.3px;line-height:20px;color:#484644;font-family:'Liberation Sans','Noto Sans CJK JP',sans-serif;font-weight:400;transform:scaleX(0.8671);">条件付き</span>
<span class="t" style="left:499.07px;top:78.70px;font-size:9.3px;line-height:20px;color:#484644;font-family:'Liberation Sans','Noto Sans CJK JP',sans-serif;font-weight:400;transform:scaleX(0.8611);">書式</span>
<span class="t" style="left:529.97px;top:68.90px;font-size:9.3px;line-height:20px;color:#484644;font-family:'Liberation Sans','Noto Sans CJK JP',sans-serif;font-weight:400;transform:scaleX(0.7120);">テーブルとして</span>
<span class="t" style="left:532.07px;top:78.70px;font-size:9.3px;line-height:20px;color:#484644;font-family:'Liberation Sans','Noto Sans CJK JP',sans-serif;font-weight:400;transform:scaleX(0.8690);">書式設定</span>
<span class="t" style="left:584.61px;top:68.90px;font-size:9.3px;line-height:20px;color:#484644;font-family:'Liberation Sans','Noto Sans CJK JP',sans-serif;font-weight:400;transform:scaleX(0.7850);">セルの</span>
<span class="t" style="left:578.34px;top:78.70px;font-size:9.3px;line-height:20px;color:#484644;font-family:'Liberation Sans','Noto Sans CJK JP',sans-serif;font-weight:400;transform:scaleX(0.6573);">スタイル</span>
<span class="t" style="left:541.33px;top:96.20px;font-size:9px;line-height:20px;color:#484644;font-family:'Liberation Sans','Noto Sans CJK JP',sans-serif;font-weight:400;transform:scaleX(0.6667);">スタイル</span>
<span class="t" style="left:641.18px;top:44.90px;font-size:9.3px;line-height:20px;color:#484644;font-family:'Liberation Sans','Noto Sans CJK JP',sans-serif;font-weight:400;transform:scaleX(0.8667);">挿入</span>
<span class="t" style="left:640.97px;top:60.70px;font-size:9.3px;line-height:20px;color:#484644;font-family:'Liberation Sans','Noto Sans CJK JP',sans-serif;font-weight:400;transform:scaleX(0.8667);">削除</span>
<span class="t" style="left:640.97px;top:77.30px;font-size:9.3px;line-height:20px;color:#484644;font-family:'Liberation Sans','Noto Sans CJK JP',sans-serif;font-weight:400;transform:scaleX(0.8667);">書式</span>
<span class="t" style="left:639.53px;top:96.20px;font-size:9px;line-height:20px;color:#484644;font-family:'Liberation Sans','Noto Sans CJK JP',sans-serif;font-weight:400;transform:scaleX(0.9412);">セル</span>
<span class="t" style="left:714.11px;top:68.90px;font-size:9.3px;line-height:20px;color:#484644;font-family:'Liberation Sans','Noto Sans CJK JP',sans-serif;font-weight:400;transform:scaleX(0.7821);">並べ替えと</span>
<span class="t" style="left:711.65px;top:78.70px;font-size:9.3px;line-height:20px;color:#484644;font-family:'Liberation Sans','Noto Sans CJK JP',sans-serif;font-weight:400;transform:scaleX(0.6780);">フィルター</span>
<span class="t" style="left:756.79px;top:68.90px;font-size:9.3px;line-height:20px;color:#484644;font-family:'Liberation Sans','Noto Sans CJK JP',sans-serif;font-weight:400;transform:scaleX(0.8381);">検索と</span>
<span class="t" style="left:754.78px;top:78.70px;font-size:9.3px;line-height:20px;color:#484644;font-family:'Liberation Sans','Noto Sans CJK JP',sans-serif;font-weight:400;transform:scaleX(0.8767);">選択</span>
<span class="t" style="left:724.77px;top:96.20px;font-size:9px;line-height:20px;color:#484644;font-family:'Liberation Sans','Noto Sans CJK JP',sans-serif;font-weight:400;transform:scaleX(0.9143);">編集</span>
<span class="t" style="left:801.19px;top:68.90px;font-size:9.3px;line-height:20px;color:#484644;font-family:'Liberation Sans','Noto Sans CJK JP',sans-serif;font-weight:400;transform:scaleX(0.8125);">アイ</span>
<span class="t" style="left:801.43px;top:78.70px;font-size:9.3px;line-height:20px;color:#484644;font-family:'Liberation Sans','Noto Sans CJK JP',sans-serif;font-weight:400;transform:scaleX(0.7536);">デア</span>
<span class="t" style="left:794.24px;top:96.20px;font-size:9px;line-height:20px;color:#484644;font-family:'Liberation Sans','Noto Sans CJK JP',sans-serif;font-weight:400;transform:scaleX(0.7647);">アイデア</span>
<span class="t" style="left:9.70px;top:122.32px;font-size:10.6px;line-height:20px;color:#555;font-family:'Liberation Sans','Noto Sans CJK JP',sans-serif;font-weight:350;transform:scaleX(0.9333);/*vink*/">AE18</span>
<span class="t" style="left:42.50px;top:165.00px;font-size:10px;line-height:20px;color:#444;font-family:'Liberation Sans','Noto Sans CJK JP',sans-serif;font-weight:350;transform:scaleX(0.9481);/*vink*/">A</span>
<span class="t" style="left:103.31px;top:165.00px;font-size:10px;line-height:20px;color:#444;font-family:'Liberation Sans','Noto Sans CJK JP',sans-serif;font-weight:350;transform:scaleX(1.0545);/*vink*/">B</span>
<span class="t" style="left:149.51px;top:164.88px;font-size:10px;line-height:20px;color:#444;font-family:'Liberation Sans','Noto Sans CJK JP',sans-serif;font-weight:350;transform:scaleX(0.9846);/*vink*/">C</span>
<span class="t" style="left:218.12px;top:165.00px;font-size:10px;line-height:20px;color:#444;font-family:'Liberation Sans','Noto Sans CJK JP',sans-serif;font-weight:350;transform:scaleX(1.0333);/*vink*/">D</span>
<span class="t" style="left:287.64px;top:165.00px;font-size:10px;line-height:20px;color:#444;font-family:'Liberation Sans','Noto Sans CJK JP',sans-serif;font-weight:350;transform:scaleX(1.0182);/*vink*/">E</span>
<span class="t" style="left:339.62px;top:165.00px;font-size:10px;line-height:20px;color:#444;font-family:'Liberation Sans','Noto Sans CJK JP',sans-serif;font-weight:350;transform:scaleX(1.0400);/*vink*/">F</span>
<span class="t" style="left:390.60px;top:164.88px;font-size:10px;line-height:20px;color:#444;font-family:'Liberation Sans','Noto Sans CJK JP',sans-serif;font-weight:350;transform:scaleX(1.0074);/*vink*/">G</span>
<span class="t" style="left:424.72px;top:165.00px;font-size:10px;line-height:20px;color:#444;font-family:'Liberation Sans','Noto Sans CJK JP',sans-serif;font-weight:350;transform:scaleX(1.0435);/*vink*/">H</span>
<span class="t" style="left:477.68px;top:165.00px;font-size:10px;line-height:20px;color:#444;font-family:'Liberation Sans','Noto Sans CJK JP',sans-serif;font-weight:350;transform:scaleX(0.9600);/*vink*/">I</span>
<span class="t" style="left:527.10px;top:164.88px;font-size:10px;line-height:20px;color:#444;font-family:'Liberation Sans','Noto Sans CJK JP',sans-serif;font-weight:350;transform:scaleX(0.9778);/*vink*/">J</span>
<span class="t" style="left:575.57px;top:165.00px;font-size:10px;line-height:20px;color:#444;font-family:'Liberation Sans','Noto Sans CJK JP',sans-serif;font-weight:350;transform:scaleX(1.1130);/*vink*/">K</span>
<span class="t" style="left:626.60px;top:165.00px;font-size:10px;line-height:20px;color:#444;font-family:'Liberation Sans','Noto Sans CJK JP',sans-serif;font-weight:350;transform:scaleX(1.0667);/*vink*/">L</span>
<span class="t" style="left:675.51px;top:165.00px;font-size:10px;line-height:20px;color:#444;font-family:'Liberation Sans','Noto Sans CJK JP',sans-serif;font-weight:350;transform:scaleX(1.0571);/*vink*/">M</span>
<span class="t" style="left:726.52px;top:165.00px;font-size:10px;line-height:20px;color:#444;font-family:'Liberation Sans','Noto Sans CJK JP',sans-serif;font-weight:350;transform:scaleX(1.0435);/*vink*/">N</span>
<span class="t" style="left:776.60px;top:164.88px;font-size:10px;line-height:20px;color:#444;font-family:'Liberation Sans','Noto Sans CJK JP',sans-serif;font-weight:350;transform:scaleX(1.0000);/*vink*/">O</span>
<span class="t" style="left:827.24px;top:165.00px;font-size:10px;line-height:20px;color:#444;font-family:'Liberation Sans','Noto Sans CJK JP',sans-serif;font-weight:350;transform:scaleX(1.0182);/*vink*/">P</span>
<span class="t" style="left:8.73px;top:181.91px;font-size:10px;line-height:20px;color:#444;font-family:'Liberation Sans','Noto Sans CJK JP',sans-serif;font-weight:350;transform:scaleX(0.7556);/*vink*/">1</span>
<span class="t" style="left:8.22px;top:199.33px;font-size:10px;line-height:20px;color:#444;font-family:'Liberation Sans','Noto Sans CJK JP',sans-serif;font-weight:350;transform:scaleX(0.9684);/*vink*/">2</span>
<span class="t" style="left:8.47px;top:216.62px;font-size:10px;line-height:20px;color:#444;font-family:'Liberation Sans','Noto Sans CJK JP',sans-serif;font-weight:350;transform:scaleX(0.9200);/*vink*/">3</span>
<span class="t" style="left:8.48px;top:234.17px;font-size:10px;line-height:20px;color:#444;font-family:'Liberation Sans','Noto Sans CJK JP',sans-serif;font-weight:350;transform:scaleX(0.8762);/*vink*/">4</span>
<span class="t" style="left:8.47px;top:251.47px;font-size:10px;line-height:20px;color:#444;font-family:'Liberation Sans','Noto Sans CJK JP',sans-serif;font-weight:350;transform:scaleX(0.9200);/*vink*/">5</span>
<span class="t" style="left:8.22px;top:268.88px;font-size:10px;line-height:20px;color:#444;font-family:'Liberation Sans','Noto Sans CJK JP',sans-serif;font-weight:350;transform:scaleX(0.9684);/*vink*/">6</span>
<span class="t" style="left:8.22px;top:286.43px;font-size:10px;line-height:20px;color:#444;font-family:'Liberation Sans','Noto Sans CJK JP',sans-serif;font-weight:350;transform:scaleX(0.9684);/*vink*/">7</span>
<span class="t" style="left:8.47px;top:303.73px;font-size:10px;line-height:20px;color:#444;font-family:'Liberation Sans','Noto Sans CJK JP',sans-serif;font-weight:350;transform:scaleX(0.9200);/*vink*/">8</span>
<span class="t" style="left:8.47px;top:321.14px;font-size:10px;line-height:20px;color:#444;font-family:'Liberation Sans','Noto Sans CJK JP',sans-serif;font-weight:350;transform:scaleX(0.9200);/*vink*/">9</span>
<span class="t" style="left:4.91px;top:338.56px;font-size:10px;line-height:20px;color:#444;font-family:'Liberation Sans','Noto Sans CJK JP',sans-serif;font-weight:350;transform:scaleX(1.0600);/*vink*/">10</span>
<span class="t" style="left:4.84px;top:356.11px;font-size:10px;line-height:20px;color:#444;font-family:'Liberation Sans','Noto Sans CJK JP',sans-serif;font-weight:350;transform:scaleX(1.1459);/*vink*/">11</span>
<span class="t" style="left:4.91px;top:373.53px;font-size:10px;line-height:20px;color:#444;font-family:'Liberation Sans','Noto Sans CJK JP',sans-serif;font-weight:350;transform:scaleX(1.0600);/*vink*/">12</span>
<span class="t" style="left:4.91px;top:390.83px;font-size:10px;line-height:20px;color:#444;font-family:'Liberation Sans','Noto Sans CJK JP',sans-serif;font-weight:350;transform:scaleX(1.0600);/*vink*/">13</span>
<span class="t" style="left:4.92px;top:408.37px;font-size:10px;line-height:20px;color:#444;font-family:'Liberation Sans','Noto Sans CJK JP',sans-serif;font-weight:350;transform:scaleX(1.0341);/*vink*/">14</span>
<span class="t" style="left:4.91px;top:425.67px;font-size:10px;line-height:20px;color:#444;font-family:'Liberation Sans','Noto Sans CJK JP',sans-serif;font-weight:350;transform:scaleX(1.0600);/*vink*/">15</span>
<span class="t" style="left:4.91px;top:443.09px;font-size:10px;line-height:20px;color:#444;font-family:'Liberation Sans','Noto Sans CJK JP',sans-serif;font-weight:350;transform:scaleX(1.0600);/*vink*/">16</span>
<span class="t" style="left:4.91px;top:460.63px;font-size:10px;line-height:20px;color:#444;font-family:'Liberation Sans','Noto Sans CJK JP',sans-serif;font-weight:350;transform:scaleX(1.0600);/*vink*/">17</span>
<span class="t" style="left:71.54px;top:217.15px;font-size:10.4px;line-height:20px;color:#2a2a2a;font-family:'Liberation Sans','Noto Sans CJK JP',sans-serif;font-weight:350;transform:scaleX(1.0466);">トップページ</span>
<span class="t" style="left:164.20px;top:217.15px;font-size:10.4px;line-height:20px;color:#2a2a2a;font-family:'Liberation Sans','Noto Sans CJK JP',sans-serif;font-weight:350;transform:scaleX(0.9962);">お知らせ</span>
<span class="t" style="left:302.96px;top:217.15px;font-size:10.4px;line-height:20px;color:#2a2a2a;font-family:'Liberation Sans','Noto Sans CJK JP',sans-serif;font-weight:350;transform:scaleX(0.9650);">詳細</span>
<span class="t" style="left:164.71px;top:251.99px;font-size:10.4px;line-height:20px;color:#2a2a2a;font-family:'Liberation Sans','Noto Sans CJK JP',sans-serif;font-weight:350;transform:scaleX(0.9767);">会社概要</span>
<span class="t" style="left:302.75px;top:251.99px;font-size:10.4px;line-height:20px;color:#2a2a2a;font-family:'Liberation Sans','Noto Sans CJK JP',sans-serif;font-weight:350;transform:scaleX(1.0007);">社長メッセージ</span>
<span class="t" style="left:302.75px;top:269.41px;font-size:10.4px;line-height:20px;color:#2a2a2a;font-family:'Liberation Sans','Noto Sans CJK JP',sans-serif;font-weight:350;transform:scaleX(0.9878);">経営理念</span>
<span class="t" style="left:302.51px;top:286.83px;font-size:10.4px;line-height:20px;color:#2a2a2a;font-family:'Liberation Sans','Noto Sans CJK JP',sans-serif;font-weight:350;transform:scaleX(0.9873);">沿革</span>
<span class="t" style="left:302.75px;top:304.25px;font-size:10.4px;line-height:20px;color:#2a2a2a;font-family:'Liberation Sans','Noto Sans CJK JP',sans-serif;font-weight:350;transform:scaleX(1.0041);">グループ会社</span>
<span class="t" style="left:164.80px;top:339.09px;font-size:10.4px;line-height:20px;color:#2a2a2a;font-family:'Liberation Sans','Noto Sans CJK JP',sans-serif;font-weight:350;transform:scaleX(1.0033);">サービス案内</span>
<span class="t" style="left:302.70px;top:339.09px;font-size:10.4px;line-height:20px;color:#2a2a2a;font-family:'Liberation Sans','Noto Sans CJK JP',sans-serif;font-weight:350;transform:scaleX(0.9958);">サービスA</span>
<span class="t" style="left:302.70px;top:356.51px;font-size:10.4px;line-height:20px;color:#2a2a2a;font-family:'Liberation Sans','Noto Sans CJK JP',sans-serif;font-weight:350;transform:scaleX(1.0063);">サービスB</span>
<span class="t" style="left:164.26px;top:373.93px;font-size:10.4px;line-height:20px;color:#2a2a2a;font-family:'Liberation Sans','Noto Sans CJK JP',sans-serif;font-weight:350;transform:scaleX(0.9833);">IR情報</span>
<span class="t" style="left:164.95px;top:391.35px;font-size:10.4px;line-height:20px;color:#2a2a2a;font-family:'Liberation Sans','Noto Sans CJK JP',sans-serif;font-weight:350;transform:scaleX(0.9829);">採用情報</span>
<span class="t" style="left:163.92px;top:408.77px;font-size:10.4px;line-height:20px;color:#2a2a2a;font-family:'Liberation Sans','Noto Sans CJK JP',sans-serif;font-weight:350;transform:scaleX(1.0207);">プライバシーポリシー</span>
<span class="t" style="left:164.20px;top:426.19px;font-size:10.4px;line-height:20px;color:#2a2a2a;font-family:'Liberation Sans','Noto Sans CJK JP',sans-serif;font-weight:350;transform:scaleX(1.0008);">お問い合わせ</span>
<span class="t" style="left:302.96px;top:426.19px;font-size:10.4px;line-height:20px;color:#2a2a2a;font-family:'Liberation Sans','Noto Sans CJK JP',sans-serif;font-weight:350;transform:scaleX(0.9679);">確認</span>
<span class="t" style="left:406.25px;top:426.19px;font-size:10.4px;line-height:20px;color:#2a2a2a;font-family:'Liberation Sans','Noto Sans CJK JP',sans-serif;font-weight:350;transform:scaleX(1.0000);">完了</span>
<span class="t" style="left:147.95px;top:216.05px;font-size:10.5px;line-height:20px;color:#5a5765;font-family:'Liberation Sans','Noto Sans CJK JP',sans-serif;font-weight:350;transform-origin:0 0;transform:scale(1.4732,0.8642) rotate(0.03deg);">┬</span>
<span class="t" style="left:149.77px;top:234.85px;font-size:10.5px;line-height:20px;color:#5a5765;font-family:'Liberation Sans','Noto Sans CJK JP',sans-serif;font-weight:350;transform-origin:0 0;transform:scale(1.1000,0.7981) rotate(0.03deg);">│</span>
<span class="t" style="left:148.71px;top:252.15px;font-size:10.5px;line-height:20px;color:#5a5765;font-family:'Liberation Sans','Noto Sans CJK JP',sans-serif;font-weight:350;transform-origin:0 0;transform:scale(1.3213,0.8061) rotate(0.03deg);">├</span>
<span class="t" style="left:149.89px;top:269.58px;font-size:10.5px;line-height:20px;color:#5a5765;font-family:'Liberation Sans','Noto Sans CJK JP',sans-serif;font-weight:350;transform-origin:0 0;transform:scale(1.1000,0.7981) rotate(0.03deg);">│</span>
<span class="t" style="left:150.37px;top:286.84px;font-size:10.5px;line-height:20px;color:#5a5765;font-family:'Liberation Sans','Noto Sans CJK JP',sans-serif;font-weight:350;transform-origin:0 0;transform:scale(1.1000,0.7965) rotate(0.03deg);">│</span>
<span class="t" style="left:149.89px;top:304.24px;font-size:10.5px;line-height:20px;color:#5a5765;font-family:'Liberation Sans','Noto Sans CJK JP',sans-serif;font-weight:350;transform-origin:0 0;transform:scale(1.1000,0.7981) rotate(0.03deg);">│</span>
<span class="t" style="left:150.37px;top:321.52px;font-size:10.5px;line-height:20px;color:#5a5765;font-family:'Liberation Sans','Noto Sans CJK JP',sans-serif;font-weight:350;transform-origin:0 0;transform:scale(1.1000,0.7965) rotate(0.03deg);">│</span>
<span class="t" style="left:148.71px;top:339.35px;font-size:10.5px;line-height:20px;color:#5a5765;font-family:'Liberation Sans','Noto Sans CJK JP',sans-serif;font-weight:350;transform-origin:0 0;transform:scale(1.3213,0.8061) rotate(0.03deg);">├</span>
<span class="t" style="left:149.77px;top:356.61px;font-size:10.5px;line-height:20px;color:#5a5765;font-family:'Liberation Sans','Noto Sans CJK JP',sans-serif;font-weight:350;transform-origin:0 0;transform:scale(1.1000,0.7981) rotate(0.03deg);">│</span>
<span class="t" style="left:148.71px;top:374.03px;font-size:10.5px;line-height:20px;color:#5a5765;font-family:'Liberation Sans','Noto Sans CJK JP',sans-serif;font-weight:350;transform-origin:0 0;transform:scale(1.3213,0.8061) rotate(0.03deg);">├</span>
<span class="t" style="left:148.71px;top:391.87px;font-size:10.5px;line-height:20px;color:#5a5765;font-family:'Liberation Sans','Noto Sans CJK JP',sans-serif;font-weight:350;transform-origin:0 0;transform:scale(1.3213,0.8061) rotate(0.03deg);">├</span>
<span class="t" style="left:148.71px;top:408.71px;font-size:10.5px;line-height:20px;color:#5a5765;font-family:'Liberation Sans','Noto Sans CJK JP',sans-serif;font-weight:350;transform-origin:0 0;transform:scale(1.3213,0.8061) rotate(0.03deg);">├</span>
<span class="t" style="left:148.73px;top:426.69px;font-size:10.5px;line-height:20px;color:#5a5765;font-family:'Liberation Sans','Noto Sans CJK JP',sans-serif;font-weight:350;transform-origin:0 0;transform:scale(1.2986,0.7953) rotate(0.03deg);">└</span>
<span class="t" style="left:287.08px;top:208.47px;font-size:10.5px;line-height:20px;color:#3a3a3a;font-family:'Liberation Sans','Noto Sans CJK JP',sans-serif;font-weight:350;transform-origin:0 0;transform:scale(0.8839,1.7333) rotate(0.03deg);">－</span>
<span class="t" style="left:285.52px;top:250.71px;font-size:10.5px;line-height:20px;color:#5a5765;font-family:'Liberation Sans','Noto Sans CJK JP',sans-serif;font-weight:350;transform-origin:0 0;transform:scale(1.4732,0.8642) rotate(0.03deg);">┬</span>
<span class="t" style="left:287.13px;top:269.73px;font-size:10.5px;line-height:20px;color:#5a5765;font-family:'Liberation Sans','Noto Sans CJK JP',sans-serif;font-weight:350;transform-origin:0 0;transform:scale(1.3412,0.8069) rotate(0.03deg);">├</span>
<span class="t" style="left:287.13px;top:286.99px;font-size:10.5px;line-height:20px;color:#5a5765;font-family:'Liberation Sans','Noto Sans CJK JP',sans-serif;font-weight:350;transform-origin:0 0;transform:scale(1.3412,0.8069) rotate(0.03deg);">├</span>
<span class="t" style="left:287.01px;top:304.13px;font-size:10.5px;line-height:20px;color:#5a5765;font-family:'Liberation Sans','Noto Sans CJK JP',sans-serif;font-weight:350;transform-origin:0 0;transform:scale(1.3784,0.8218) rotate(0.03deg);">└</span>
<span class="t" style="left:285.55px;top:337.87px;font-size:10.5px;line-height:20px;color:#5a5765;font-family:'Liberation Sans','Noto Sans CJK JP',sans-serif;font-weight:350;transform-origin:0 0;transform:scale(1.4732,0.8642) rotate(0.03deg);">┬</span>
<span class="t" style="left:286.74px;top:355.71px;font-size:10.5px;line-height:20px;color:#5a5765;font-family:'Liberation Sans','Noto Sans CJK JP',sans-serif;font-weight:350;transform-origin:0 0;transform:scale(1.3784,0.8218) rotate(0.03deg);">└</span>
<span class="t" style="left:287.08px;top:417.63px;font-size:10.5px;line-height:20px;color:#3a3a3a;font-family:'Liberation Sans','Noto Sans CJK JP',sans-serif;font-weight:350;transform-origin:0 0;transform:scale(0.8839,1.7333) rotate(0.03deg);">－</span>
<span class="t" style="left:389.88px;top:417.63px;font-size:10.5px;line-height:20px;color:#3a3a3a;font-family:'Liberation Sans','Noto Sans CJK JP',sans-serif;font-weight:350;transform-origin:0 0;transform:scale(0.8839,1.7333) rotate(0.03deg);">－</span>
<span class="t" style="left:461.39px;top:68.10px;font-size:6px;line-height:20px;color:#444;font-family:'Liberation Sans','Noto Sans CJK JP',sans-serif;font-weight:350;transform-origin:0 0;transform:scale(1.0889,1.1510) rotate(0.03deg);">0</span>
<span class="t" style="left:454.29px;top:74.79px;font-size:6px;line-height:20px;color:#444;font-family:'Liberation Sans','Noto Sans CJK JP',sans-serif;font-weight:350;transform-origin:0 0;transform:scale(1.2774,1.0752) rotate(0.03deg);">.00</span>
<span class="t" style="left:470.02px;top:68.48px;font-size:6px;line-height:20px;color:#444;font-family:'Liberation Sans','Noto Sans CJK JP',sans-serif;font-weight:350;transform-origin:0 0;transform:scale(1.2536,1.1480) rotate(0.03deg);">.00</span>
<span class="t" style="left:477.15px;top:74.72px;font-size:6px;line-height:20px;color:#444;font-family:'Liberation Sans','Noto Sans CJK JP',sans-serif;font-weight:350;transform-origin:0 0;transform:scale(1.0653,1.0826) rotate(0.03deg);">0</span>
<span class="t" style="left:722.16px;top:44.25px;font-size:10px;line-height:20px;color:#2b7cd3;font-family:'Liberation Sans','Noto Sans CJK JP',sans-serif;font-weight:350;transform-origin:0 0;transform:scale(1.1934,1.0811) rotate(0.03deg);">A</span>
<span class="t" style="left:721.97px;top:55.03px;font-size:10px;line-height:20px;color:#444;font-family:'Liberation Sans','Noto Sans CJK JP',sans-serif;font-weight:350;transform-origin:0 0;transform:scale(1.2507,1.0337) rotate(0.03deg);">Z</span>
<span class="t" style="left:354.85px;top:47.43px;font-size:7.5px;line-height:20px;color:#444;font-family:'Liberation Sans','Noto Sans CJK JP',sans-serif;font-weight:350;transform-origin:0 0;transform:scale(1.0558,1.0566) rotate(0.03deg);">ab</span>
<span class="t" style="left:356.14px;top:55.24px;font-size:7.5px;line-height:20px;color:#444;font-family:'Liberation Sans','Noto Sans CJK JP',sans-serif;font-weight:350;transform-origin:0 0;transform:scale(1.0268,0.8180) rotate(0.03deg);">c</span>
<span class="t" style="left:156.33px;top:120.07px;font-size:9.5px;line-height:20px;color:#3a3a3a;font-family:'Liberation Serif',serif;font-weight:350;font-style:italic;transform-origin:0 0;transform:scale(1.5862,0.9357) rotate(0.03deg);">f</span>
<span class="t" style="left:160.07px;top:122.45px;font-size:8px;line-height:20px;color:#3a3a3a;font-family:'Liberation Serif',serif;font-weight:bold;font-style:italic;transform-origin:0 0;transform:scale(0.9569,0.9114) rotate(0.03deg);">x</span>
<span class="t" style="left:234.33px;top:71.00px;font-size:6px;line-height:20px;color:#a3a19f;font-family:'Liberation Sans','Noto Sans CJK JP',sans-serif;font-weight:350;transform-origin:0 0;transform:scale(1.0664,1.0306) rotate(0.03deg);">ア</span>
<span class="t" style="left:234.14px;top:77.60px;font-size:6px;line-height:20px;color:#a3a19f;font-family:'Liberation Sans','Noto Sans CJK JP',sans-serif;font-weight:350;transform-origin:0 0;transform:scale(1.0499,0.8580) rotate(0.03deg);">亜</span>
</div>
<!-- window borders -->
<div class="a" style="left:0;top:0;width:1px;height:484px;background:#217346"></div>
<div class="a" style="left:1px;top:22px;width:1px;height:462px;background:rgba(255,255,255,0.6)"></div>
<div class="a" style="left:858px;top:22px;width:1px;height:462px;background:rgba(255,255,255,0.55)"></div>
<div class="a" style="left:859px;top:0;width:1px;height:484px;background:#217346"></div>
</body>
</html>
